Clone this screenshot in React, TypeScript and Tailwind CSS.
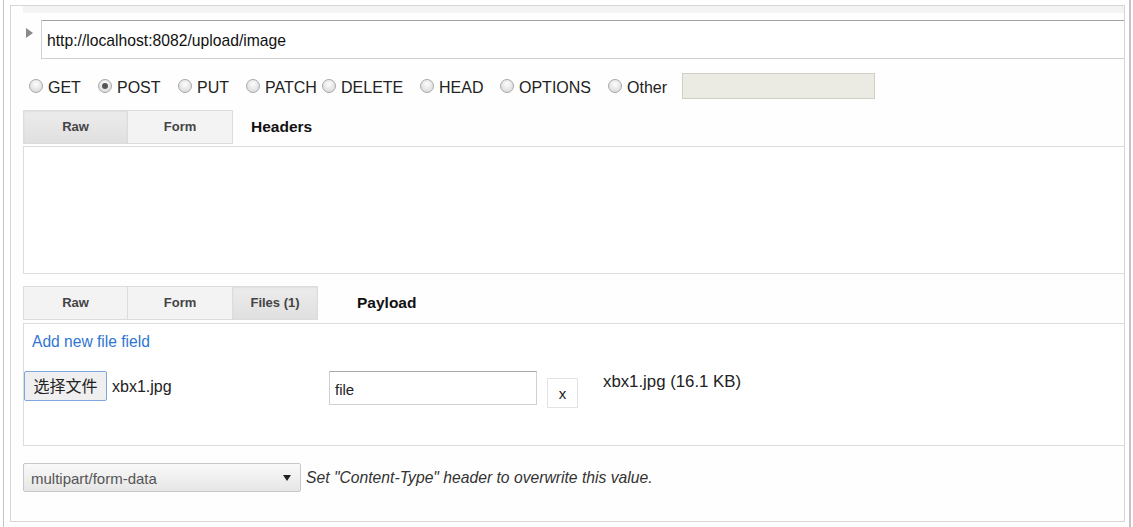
import React from 'react'

const methods = [
  { label: 'GET', w: 'w-[69px]' },
  { label: 'POST', w: 'w-[80px]', checked: true },
  { label: 'PUT', w: 'w-[68px]' },
  { label: 'PATCH', w: 'w-[76px]' },
  { label: 'DELETE', w: 'w-[98px]' },
  { label: 'HEAD', w: 'w-[80px]' },
  { label: 'OPTIONS', w: 'w-[108px]' },
  { label: 'Other', w: 'w-[74px]' },
]

const Radio = ({ checked }: { checked?: boolean }) => (
  <span className="w-[14px] h-[14px] rounded-full border border-[#a8a8a8] bg-[radial-gradient(circle_at_50%_35%,#fdfdfd,#d2d2d2)] flex items-center justify-center shrink-0">
    {checked && <span className="w-[6px] h-[6px] rounded-full bg-[#555]" />}
  </span>
)

const Tab = ({ label, active, w, first }: { label: string; active?: boolean; w: string; first?: boolean }) => (
  <div
    className={`${w} h-[34px] border border-[#dcdcdc] ${first ? '' : 'border-l-0'} flex items-center justify-center text-[13px] font-bold text-[#444] ${
      active ? 'bg-[linear-gradient(#ececec,#e0e0e0)] shadow-[inset_0_1px_2px_rgba(0,0,0,0.06)]' : 'bg-[#f3f3f3]'
    }`}
  >
    {label}
  </div>
)

export default function App() {
  return (
    <div className="w-[1133px] h-[527px] bg-white flex font-['Liberation_Sans','Noto_Sans_CJK_SC',Arial,sans-serif] text-[#222]">
      <div className="ml-[3px] w-[1128px] h-full border-l border-r-2 border-[#c4c4c4]">
        <div className="ml-[6px] mt-[5px] w-[1115px] h-[517px] border border-[#d6d6d6] pl-[12px] bg-[#fefefe]">
          <div className="h-[7px] bg-[#f4f4f4]" />

          {/* url */}
          <div className="mt-[7px] flex">
            <div className="w-[18px] shrink-0">
              <div className="ml-[3px] mt-[8px] w-0 h-0 border-y-[5px] border-y-transparent border-l-[7px] border-l-[#8a8a8a]" />
            </div>
            <div className="flex-1 h-[39px] border border-[#d0d0d0] border-t-[#a3a3a3] border-r-0 bg-white flex items-center pl-[5px] pt-[3px] text-[15.7px] text-[#111]">
              http://localhost:8082/upload/image
            </div>
          </div>

          {/* methods */}
          <div className="mt-[14px] h-[26px] flex items-center pl-[6px] text-[16px] text-[#222]">
            {methods.map((m) => (
              <label key={m.label} className={`${m.w} flex items-center gap-[5px]`}>
                <Radio checked={m.checked} />
                <span className="pt-[3px]">{m.label}</span>
              </label>
            ))}
            <div className="w-[193px] h-[26px] border border-[#cfcfc8] bg-[#ebebe4]" />
          </div>

          {/* headers */}
          <div className="mt-[11px] flex items-center">
            <Tab label="Raw" active w="w-[105px]" first />
            <Tab label="Form" w="w-[105px]" />
            <span className="ml-[18px] text-[15.5px] font-bold text-[#111]">Headers</span>
          </div>
          <div className="mt-[2px] h-[128px] border border-[#dcdcdc] border-r-0 bg-white" />

          {/* payload */}
          <div className="mt-[12px] flex items-center">
            <Tab label="Raw" w="w-[105px]" first />
            <Tab label="Form" w="w-[105px]" />
            <Tab label="Files (1)" active w="w-[85px]" />
            <span className="ml-[39px] text-[15.5px] font-bold text-[#111]">Payload</span>
          </div>
          <div className="mt-[3px] h-[123px] border border-[#dcdcdc] border-r-0 bg-white">
            <div className="mt-[9px] ml-[8px] text-[15.6px] leading-[18px] text-[#2f76d2]">Add new file field</div>
            <div className="mt-[20px] flex items-start">
              <div className="w-[83px] h-[30px] border border-[#7ea6e0] rounded-[2px] bg-[#efefef] flex items-center justify-center text-[16px] pt-[1px] text-[#222]">
                选择文件
              </div>
              <div className="w-[222px] pl-[5px] pt-[7px] text-[16px] leading-[18px] text-[#222]">xbx1.jpg</div>
              <div className="w-[208px] h-[34px] border border-[#d0d0d0] border-t-[#a8a8a8] bg-white flex items-center pl-[5px] text-[15px] pt-[5px] text-[#222]">
                file
              </div>
              <div className="ml-[10px] mt-[7px] w-[31px] h-[30px] border border-[#e3e3e3] bg-white flex items-center justify-center text-[15px] pt-[2px] text-[#222]">
                x
              </div>
              <div className="ml-[25px] mt-[2px] text-[16.8px] leading-[18px] text-[#222]">xbx1.jpg (16.1 KB)</div>
            </div>
          </div>

          {/* content type */}
          <div className="mt-[17px] flex items-center">
            <div className="w-[278px] h-[29px] border border-[#c8c8c8] rounded-[2px] bg-[linear-gradient(#f9f9f9,#e6e6e6)] flex items-center justify-between pl-[7px] pr-[9px] text-[15px] text-[#555]">
              <span className="pt-[3px]">multipart/form-data</span>
              <span className="w-0 h-0 border-x-[4px] border-x-transparent border-t-[6px] border-t-[#222]" />
            </div>
            <span className="ml-[5px] text-[15.7px] italic text-[#333]">Set "Content-Type" header to overwrite this value.</span>
          </div>
        </div>
      </div>
    </div>
  )
}
